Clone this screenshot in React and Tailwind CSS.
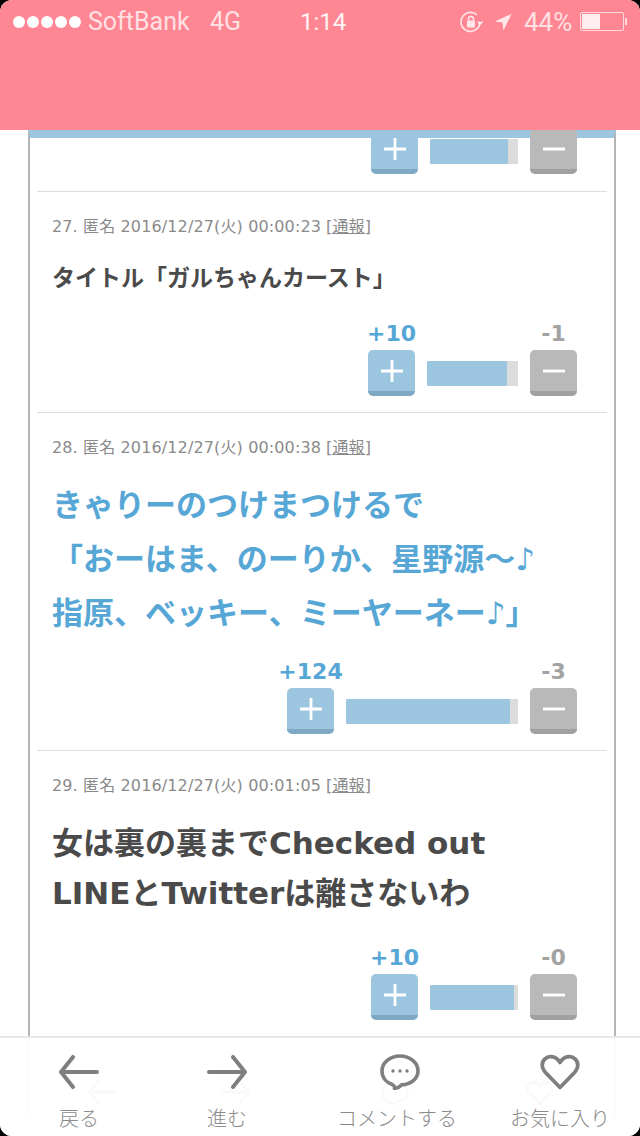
const sansStack = 'font-["DejaVu_Sans","Noto_Sans_CJK_JP",sans-serif]';

const BackIcon = ({ className }) => (
  <svg viewBox="0 0 40 34" className={className} fill="none" stroke="currentColor" strokeWidth="4" strokeLinecap="round" strokeLinejoin="round">
    <path d="M38 17H3M14 2 2 17l12 15" />
  </svg>
);

const ForwardIcon = ({ className }) => (
  <svg viewBox="0 0 40 34" className={className} fill="none" stroke="currentColor" strokeWidth="4" strokeLinecap="round" strokeLinejoin="round">
    <path d="M2 17h35M26 2l12 15-12 15" />
  </svg>
);

const CommentIcon = ({ className }) => (
  <svg viewBox="0 0 40 36" className={className} fill="none">
    <path d="M20 2C10 2 2 8.800 2 17c0 7 5 12 11 14 1 .5 1.800 1.500 1.500 3.500 3-.5 5.500-2 7-3.600C31 30.300 38 24.500 38 17 38 8.800 30 2 20 2Z" stroke="currentColor" strokeWidth="3.600" strokeLinejoin="round" />
    <circle cx="13" cy="17" r="1.700" fill="currentColor" />
    <circle cx="20" cy="17" r="1.700" fill="currentColor" />
    <circle cx="27" cy="17" r="1.700" fill="currentColor" />
  </svg>
);

const HeartIcon = ({ className }) => (
  <svg viewBox="0 0 40 36" className={className} fill="none" stroke="currentColor" strokeWidth="3.800" strokeLinejoin="round">
    <path d="M20 33.500 5 18C1 13.500 1.500 7.500 5.500 4.500 9.500 1.500 16 2 20 8.500 24 2 30.500 1.500 34.500 4.500 38.500 7.500 39 13.500 35 18L20 33.500Z" />
  </svg>
);

const StatusBar = () => (
  <div className="h-10 flex items-center pl-[13px] pr-[10px] pt-[3px] text-[25px] leading-none text-white/75 font-['Roboto',sans-serif] font-normal">
    <div className="flex gap-[2px] w-[75px]">
      {[0, 1, 2, 3, 4].map((i) => (
        <span key={i} className="w-[12px] h-[12px] rounded-full bg-white" />
      ))}
    </div>
    <span className="w-[122px]">SoftBank</span>
    <span className="w-[90px]">4G</span>
    <span className="w-[159px] text-white/90 text-[24px]">1:14</span>
    <svg viewBox="0 0 24 24" className="w-[24px] h-[24px] text-white/80" fill="none" stroke="currentColor" strokeWidth="1.600">
      <path d="M21 12a9.500 9.500 0 1 1-3-7" />
      <path d="M23.500 11.500 21 14l-2-2.500" />
      <rect x="8" y="10.500" width="8" height="7" rx="1" fill="currentColor" stroke="none" />
      <path d="M9.500 10.500V9a2.500 2.500 0 0 1 5 0v1.500" />
    </svg>
    <svg viewBox="0 0 20 20" className="w-[18px] h-[20px] ml-[11px] text-white/80" fill="currentColor">
      <path d="M19.500 1 1 9.500l8.500 1 1 9Z" />
    </svg>
    <span className="ml-[12px] w-[56px] text-[26px]">44%</span>
    <div className="relative w-[44px] h-[19px] border border-white/70 rounded-[2px] p-[1px]">
      <div className="h-full w-[18px] bg-white/85" />
      <span className="absolute -right-[4px] top-[5px] w-[2px] h-[7px] bg-white/70" />
    </div>
  </div>
);

const VoteBar = ({ plus, minus, plusWidth, fill, clipTop }) => (
  <div className={`flex flex-col items-stretch ${clipTop ? '-mt-[10px]' : ''}`}>
    {!clipTop && (
      <div className={`flex justify-between items-end h-[24px] mb-[5px] text-[22px] font-bold leading-none font-["DejaVu_Sans",sans-serif]`}>
        <span className="w-[47px] flex justify-center whitespace-nowrap text-[#57a7d6]">{plus}</span>
        <span className="w-[47px] flex justify-center text-[#a3a3a3]">{minus}</span>
      </div>
    )}
    <div className="flex items-center">
      <div className="w-[47px] h-[46px] rounded-[5px] bg-[#9cc5df] border-b-[5px] border-[#7fa9c3] flex items-center justify-center text-white">
        <svg viewBox="0 0 24 24" className="w-[24px] h-[24px]" fill="none" stroke="currentColor" strokeWidth="2.800">
          <path d="M12 1v22M1 12h22" />
        </svg>
      </div>
      <div className="mx-[12px] h-[25px] bg-[#dcdcdc]" style={{ width: plusWidth }}>
        <div className="h-full bg-[#9cc5df] rounded-l-[2px]" style={{ width: fill }} />
      </div>
      <div className="w-[47px] h-[46px] rounded-[5px] bg-[#b9b9b9] border-b-[5px] border-[#a0a0a0] flex items-center justify-center text-white">
        <svg viewBox="0 0 24 24" className="w-[24px] h-[24px]" fill="none" stroke="currentColor" strokeWidth="2.800">
          <path d="M1 12h22" />
        </svg>
      </div>
    </div>
  </div>
);

const Meta = ({ children }) => (
  <div className="h-[20px] flex items-center text-[16px] tracking-[0.13px] leading-none text-[#8a8a8a] whitespace-nowrap">
    {children} <span className="ml-[5px] underline">[通報]</span>
  </div>
);

const Comment = ({ meta, lines, textClass, lineClass, vote, bodyClass }) => (
  <div className="border-b border-[#dedede] mx-[7px] px-[15px] pt-[25px] pb-[16px]">
    <Meta>{meta}</Meta>
    <div className={bodyClass}>
      {lines.map((l) => (
        <p key={l} className={`${textClass} ${lineClass} whitespace-nowrap`}>{l}</p>
      ))}
    </div>
    <div className="flex justify-end pr-[15px]">
      <VoteBar {...vote} />
    </div>
  </div>
);

export default function App() {
  return (
    <div className="w-[640px] h-[1136px] bg-black">
      <div className={`relative w-full h-full overflow-hidden rounded-[12px] bg-white ${sansStack}`}>
        <header className="h-[130px] bg-[#fe8793] relative z-10">
          <StatusBar />
        </header>

        <main className="ml-[28px] mr-[24px] border-x-2 border-[#b4b4b4] border-t-[8px] border-t-[#9cc5df]">
          {/* row cut off by the header */}
          <div className="border-b border-[#dedede] mx-[7px] h-[54px] flex justify-end pr-[30px]">
            <VoteBar plusWidth="88px" fill="78px" clipTop />
          </div>

          <Comment
            meta="27. 匿名 2016/12/27(火) 00:00:23"
            lines={['タイトル「ガルちゃんカースト」']}
            textClass="text-[23px] font-bold text-[#4a4a4a]"
            lineClass="leading-[32px]"
            bodyClass="mt-[25px] mb-[27px]"
            vote={{ plus: '+10', minus: '-1', plusWidth: '91px', fill: '80px' }}
          />

          <Comment
            meta="28. 匿名 2016/12/27(火) 00:00:38"
            lines={['きゃりーのつけまつけるで', '「おーはま、のーりか、星野源〜♪', '指原、ベッキー、ミーヤーネー♪」']}
            textClass="text-[31px] font-bold text-[#57a7d6]"
            lineClass="leading-[54px]"
            bodyClass="mt-[20px] mb-[19px]"
            vote={{ plus: '+124', minus: '-3', plusWidth: '172px', fill: '164px' }}
          />

          <Comment
            meta="29. 匿名 2016/12/27(火) 00:01:05"
            lines={['女は裏の裏までChecked out', 'LINEとTwitterは離さないわ']}
            textClass="text-[31px] font-bold text-[#4a4a4a]"
            lineClass="leading-[50px]"
            bodyClass="mt-[22px] mb-[27px]"
            vote={{ plus: '+10', minus: '-0', plusWidth: '88px', fill: '84px' }}
          />

          {/* page's own nav showing through the bar */}
          <div className="h-[80px] flex text-[#707070] pt-[43px] pl-[58px]">
            <BackIcon className="w-[28px] h-[24px]" />
            <ForwardIcon className="w-[28px] h-[24px] ml-[106px]" />
            <CommentIcon className="w-[28px] h-[26px] ml-[131px]" />
            <HeartIcon className="w-[28px] h-[26px] ml-[117px]" />
          </div>
        </main>

        <nav className="absolute left-0 right-0 bottom-0 h-[100px] bg-white/[0.96] border-t-2 border-[#e8e8e8] grid grid-cols-[158px_138px_202px_124px] text-[#7f7f7f]">
          {[
            ['戻る', BackIcon, 'w-[40px] h-[34px]'],
            ['進む', ForwardIcon, 'w-[40px] h-[34px]'],
            ['コメントする', CommentIcon, 'w-[40px] h-[36px] ml-[6px]'],
            ['お気に入り', HeartIcon, 'w-[40px] h-[36px]'],
          ].map(([label, Icon, size]) => (
            <div key={label} className="flex flex-col items-center pt-[16px]">
              <div className="h-[36px] flex items-center">
                <Icon className={size} />
              </div>
              <span className="mt-[18px] text-[20px] leading-none whitespace-nowrap text-[#8a8a8a] font-['Noto_Sans_CJK_JP',sans-serif] font-light">{label}</span>
            </div>
          ))}
        </nav>
      </div>
    </div>
  );
}
